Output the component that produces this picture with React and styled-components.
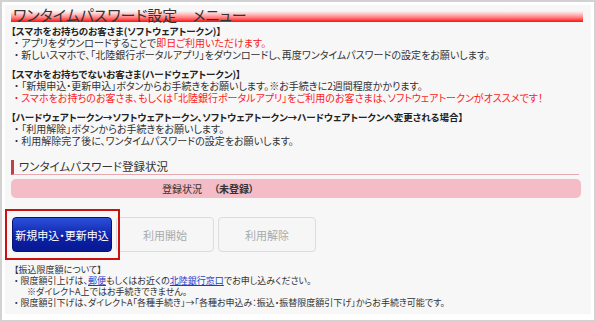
import styled, { createGlobalStyle } from "styled-components";

const Global = createGlobalStyle`
  body {
    margin: 0;
    background: #fff;
    font-family: "Noto Sans CJK JP", "Noto Sans", sans-serif;
    color: #333;
  }
`;

const Frame = styled.div`
  width: 596px;
  height: 322px;
  box-sizing: border-box;
  border: 2px solid #d2d2d2;
  padding: 3px 3px 6px 3px;
  background: #fff;
`;

const Panel = styled.div`
  height: 100%;
  background: #f7f7f7;
  padding: 2px 8px 0 6px;
  box-sizing: border-box;
  font-size: 10px;
  line-height: 12px;
  font-feature-settings: "palt";
`;

const Title = styled.h1`
  margin: 0 0 3px 0;
  padding: 0 0 0 2px;
  font-size: 15px;
  line-height: 15px;
  font-weight: normal;
  color: #333;
  background: linear-gradient(
    to bottom,
    transparent 0%,
    transparent 25%,
    #ffd6d6 40%,
    #ff8080 70%,
    #ff1010 100%
  );
`;

const Block = styled.div`
  margin-bottom: 7px;
`;

const Head = styled.div`
  font-weight: bold;
  font-size: 9.5px;
  color: #222;
`;

const Item = styled.div`
  padding-left: 3px;
  color: ${(p) => (p.red ? "#ff1a1a" : "#333")};
`;

const Red = styled.span`
  color: #ff1a1a;
`;

const SubTitle = styled.h2`
  margin: 13px 4px 4px 0;
  padding: 0 0 1px 5px;
  font-size: 11.5px;
  line-height: 13px;
  font-weight: normal;
  border-left: 3px solid #c0404a;
  border-bottom: 1px solid #e8a8b0;
  color: #333;
`;

const Status = styled.div`
  height: 19px;
  border-radius: 5px;
  background: #f4bcc6;
  display: flex;
  align-items: center;
  padding-left: 151px;
  gap: 12px;
  font-size: 10px;
  margin-right: 2px;
`;

const StatusValue = styled.span`
  font-weight: bold;
`;

const Buttons = styled.div`
  display: flex;
  gap: 4px;
  margin: 19px 0 0 1px;
`;

const Highlight = styled.div`
  position: relative;
  display: flex;
`;

const Focus = styled.div`
  position: absolute;
  top: -8px;
  left: -7px;
  right: -8px;
  bottom: -8px;
  border: 2px solid #cc1111;
  pointer-events: none;
  z-index: 1;
`;

const Button = styled.button`
  width: ${(p) => (p.primary ? "100px" : "98px")};
  height: 35px;
  border-radius: 4px;
  font-family: inherit;
  font-size: 11px;
  font-feature-settings: "palt";
  cursor: pointer;
  padding: 0;
  border: 1px solid ${(p) => (p.primary ? "#0a1470" : "#dcdcdc")};
  background: ${(p) =>
    p.primary ? "linear-gradient(#2c50d8, #0c20a8 60%, #081890)" : "#f6f6f6"};
  color: ${(p) => (p.primary ? "#fff" : "#aaa")};
`;

const Notes = styled.div`
  margin-top: 12px;
  font-size: 9px;
  line-height: 11px;
`;

const Note = styled.div`
  padding-left: ${(p) => (p.indent ? "16px" : "3px")};
`;

const Link = styled.a`
  color: #1a3cc8;
  text-decoration: underline;
`;

export default function App() {
  return (
    <>
      <Global />
      <Frame>
        <Panel>
          <Title>ワンタイムパスワード設定　メニュー</Title>
          <Block>
            <Head>【スマホをお持ちのお客さま(ソフトウェアトークン)】</Head>
            <Item>
              ・ アプリをダウンロードすることで<Red>即日ご利用いただけます。</Red>
            </Item>
            <Item>
              ・ 新しいスマホで、「北陸銀行ポータルアプリ」をダウンロードし、再度ワンタイムパスワードの設定をお願いします。
            </Item>
          </Block>
          <Block>
            <Head>【スマホをお持ちでないお客さま(ハードウェアトークン)】</Head>
            <Item>・ 「新規申込・更新申込」ボタンからお手続きをお願いします。※お手続きに2週間程度かかります。</Item>
            <Item red>
              ・ スマホをお持ちのお客さま、もしくは「北陸銀行ポータルアプリ」をご利用のお客さまは、ソフトウェアトークンがオススメです！
            </Item>
          </Block>
          <Block>
            <Head>【ハードウェアトークン→ソフトウェアトークン、ソフトウェアトークン→ハードウェアトークンへ変更される場合】</Head>
            <Item>・ 「利用解除」ボタンからお手続きをお願いします。</Item>
            <Item>・ 利用解除完了後に、ワンタイムパスワードの設定をお願いします。</Item>
          </Block>
          <SubTitle>ワンタイムパスワード登録状況</SubTitle>
          <Status>
            <span>登録状況</span>
            <StatusValue>（未登録）</StatusValue>
          </Status>
          <Buttons>
            <Highlight>
              <Button primary>新規申込・更新申込</Button>
              <Focus />
            </Highlight>
            <Button disabled>利用開始</Button>
            <Button disabled>利用解除</Button>
          </Buttons>
          <Notes>
            <Note>【振込限度額について】</Note>
            <Note>
              ・ 限度額引上げは、<Link href="#">郵便</Link>もしくはお近くの
              <Link href="#">北陸銀行窓口</Link>でお申し込みください。
            </Note>
            <Note indent>※ダイレクトA上ではお手続きできません。</Note>
            <Note>
              ・ 限度額引下げは、ダイレクトA「各種手続き」→「各種お申込み：振込・振替限度額引下げ」からお手続き可能です。
            </Note>
          </Notes>
        </Panel>
      </Frame>
    </>
  );
}
